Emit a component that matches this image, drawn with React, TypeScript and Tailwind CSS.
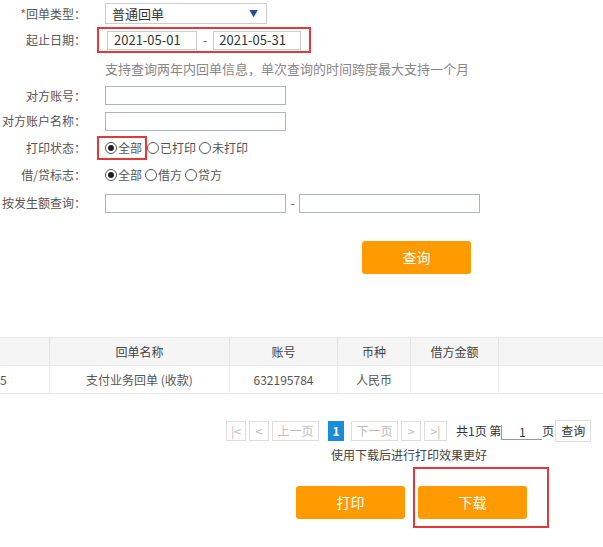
import type { ReactNode } from 'react'

const FONT = { fontFamily: '"Noto Sans CJK SC", "Noto Sans", sans-serif' }

function Label({ children, required }: { children: ReactNode; required?: boolean }) {
  return (
    <div className="w-[86px] shrink-0 text-right text-[12px] text-[#555] whitespace-nowrap">
      {required && <span className="text-[#e4393c]">*</span>}
      {children}
    </div>
  )
}

function Row({ h, label, required, children }: { h: string; label?: string; required?: boolean; children: ReactNode }) {
  return (
    <div className={`flex items-center ${h}`}>
      <Label required={required}>{label}</Label>
      <div className="ml-[19px] flex items-center">{children}</div>
    </div>
  )
}

function Radio({ checked, label }: { checked?: boolean; label: string }) {
  return (
    <span className="flex items-center text-[12px] text-[#555] mr-[3px]">
      <span className="w-[12px] h-[12px] rounded-full border border-[#555] flex items-center justify-center mr-[1px] bg-white">
        {checked && <span className="w-[6px] h-[6px] rounded-full bg-[#222]" />}
      </span>
      {label}
    </span>
  )
}

function PageBtn({ children, w }: { children: ReactNode; w: string }) {
  return (
    <span className={`h-[20px] ${w} border border-[#ddd] text-[#bbb] text-[12px] flex items-center justify-center mr-[3px]`}>
      {children}
    </span>
  )
}

export default function App() {
  const cols = ['w-[50px]', 'w-[180px]', 'w-[108px]', 'w-[73px]', 'w-[88px]', 'flex-1']
  return (
    <div className="w-[603px] h-[547px] bg-white overflow-hidden relative" style={FONT}>
      <div className="flex flex-col">
        <Row h="h-[27px]" label="回单类型：" required>
          <div className="w-[162px] h-[21px] border border-[#ccc] flex items-center justify-between px-[6px] text-[13px] text-[#333]">
            <span>普通回单</span>
            <span className="text-[#1e4f8f] text-[9px] mr-[2px]">▼</span>
          </div>
        </Row>
        <div className="flex items-center h-[26px]">
          <Label>起止日期：</Label>
          <div className="ml-[11px] border-2 border-[#e4393c] h-[26px] w-[214px] flex items-center px-[8px]">
            <div className="w-[92px] h-[19px] border border-[#ccc] flex items-center pl-[6px] text-[13px] text-[#333]">2021-05-01</div>
            <span className="w-[17px] text-center text-[12px] text-[#555]">-</span>
            <div className="w-[90px] h-[19px] border border-[#ccc] flex items-center pl-[5px] text-[13px] text-[#333]">2021-05-31</div>
          </div>
        </div>
        <Row h="h-[31px]">
          <span className="text-[13px] text-[#888] whitespace-nowrap">支持查询两年内回单信息，单次查询的时间跨度最大支持一个月</span>
        </Row>
        <Row h="h-[23px]" label="对方账号：">
          <div className="w-[181px] h-[19px] border border-[#aab6c2]" />
        </Row>
        <Row h="h-[28px]" label="对方账户名称：">
          <div className="w-[181px] h-[19px] border border-[#aab6c2]" />
        </Row>
        <div className="flex items-center h-[26px]">
          <Label>打印状态：</Label>
          <div className="ml-[11px] flex items-center">
            <div className="border-2 border-[#e4393c] h-[24px] w-[50px] flex items-center pl-[6px]">
              <Radio checked label="全部" />
            </div>
            <Radio label="已打印" />
            <Radio label="未打印" />
          </div>
        </div>
        <Row h="h-[28px]" label="借/贷标志：">
          <Radio checked label="全部" />
          <Radio label="借方" />
          <Radio label="贷方" />
        </Row>
        <Row h="h-[28px]" label="按发生额查询：">
          <div className="w-[181px] h-[19px] border border-[#aab6c2]" />
          <span className="w-[13px] text-center text-[12px] text-[#555]">-</span>
          <div className="w-[181px] h-[19px] border border-[#aab6c2]" />
        </Row>
      </div>

      <div className="mt-[24px] ml-[362px] w-[109px] h-[33px] rounded-[3px] bg-[#ff9a00] text-white text-[14px] flex items-center justify-center">
        查询
      </div>

      <div className="mt-[63px] border-t border-[#e8e8e8]">
        <div className="flex h-[28px] bg-[#f5f5f5] border-b border-[#e8e8e8] text-[12px] text-[#444]">
          {['', '回单名称', '账号', '币种', '借方金额', ''].map((t, i) => (
            <div key={i} className={`${cols[i]} flex items-center justify-center ${i < 5 ? 'border-r border-[#e4e4e4]' : ''}`}>{t}</div>
          ))}
        </div>
        <div className="flex h-[28px] border-b border-[#e8e8e8] text-[12px] text-[#555]">
          {['5', '支付业务回单 (收款)', '632195784', '人民币', '', ''].map((t, i) => (
            <div key={i} className={`${cols[i]} flex items-center ${i === 0 ? 'justify-start' : 'justify-center'} ${i < 5 ? 'border-r border-[#eee]' : ''}`}>{t}</div>
          ))}
        </div>
      </div>

      <div className="mt-[26px] flex items-center ml-[226px]">
        <PageBtn w="w-[20px]">|&lt;</PageBtn>
        <PageBtn w="w-[20px]">&lt;</PageBtn>
        <PageBtn w="w-[47px]">上一页</PageBtn>
        <span className="ml-[6px] mr-[7px] h-[20px] w-[16px] bg-[#1a8bd6] text-white text-[12px] font-bold flex items-center justify-center">1</span>
        <PageBtn w="w-[47px]">下一页</PageBtn>
        <PageBtn w="w-[20px]">&gt;</PageBtn>
        <PageBtn w="w-[23px]">&gt;|</PageBtn>
        <span className="ml-[6px] text-[12px] text-[#333] whitespace-nowrap">共1页 第</span>
        <span className="w-[41px] h-[15px] border-b border-l border-[#999] mt-[3px] text-[12px] text-[#333] flex items-center justify-center">1</span>
        <span className="text-[12px] text-[#333]">页</span>
        <span className="ml-[1px] h-[22px] w-[36px] border border-[#ddd] text-[12px] text-[#333] flex items-center justify-center">查询</span>
      </div>

      <div className="mt-[4px] ml-[331px] text-[12px] text-[#444] whitespace-nowrap h-[18px] leading-[18px]">使用下载后进行打印效果更好</div>

      <div className="mt-[3px] flex items-start">
        <div className="mt-[19px] ml-[296px] w-[109px] h-[33px] rounded-[3px] bg-[#ff9a00] text-white text-[14px] flex items-center justify-center">
          打印
        </div>
        <div className="ml-[8px] border-2 border-[#e4393c] w-[136px] h-[61px] pl-[3px] pt-[17px]">
          <div className="w-[109px] h-[33px] rounded-[3px] bg-[#ff9a00] text-white text-[14px] flex items-center justify-center">
            下载
          </div>
        </div>
      </div>
    </div>
  )
}
